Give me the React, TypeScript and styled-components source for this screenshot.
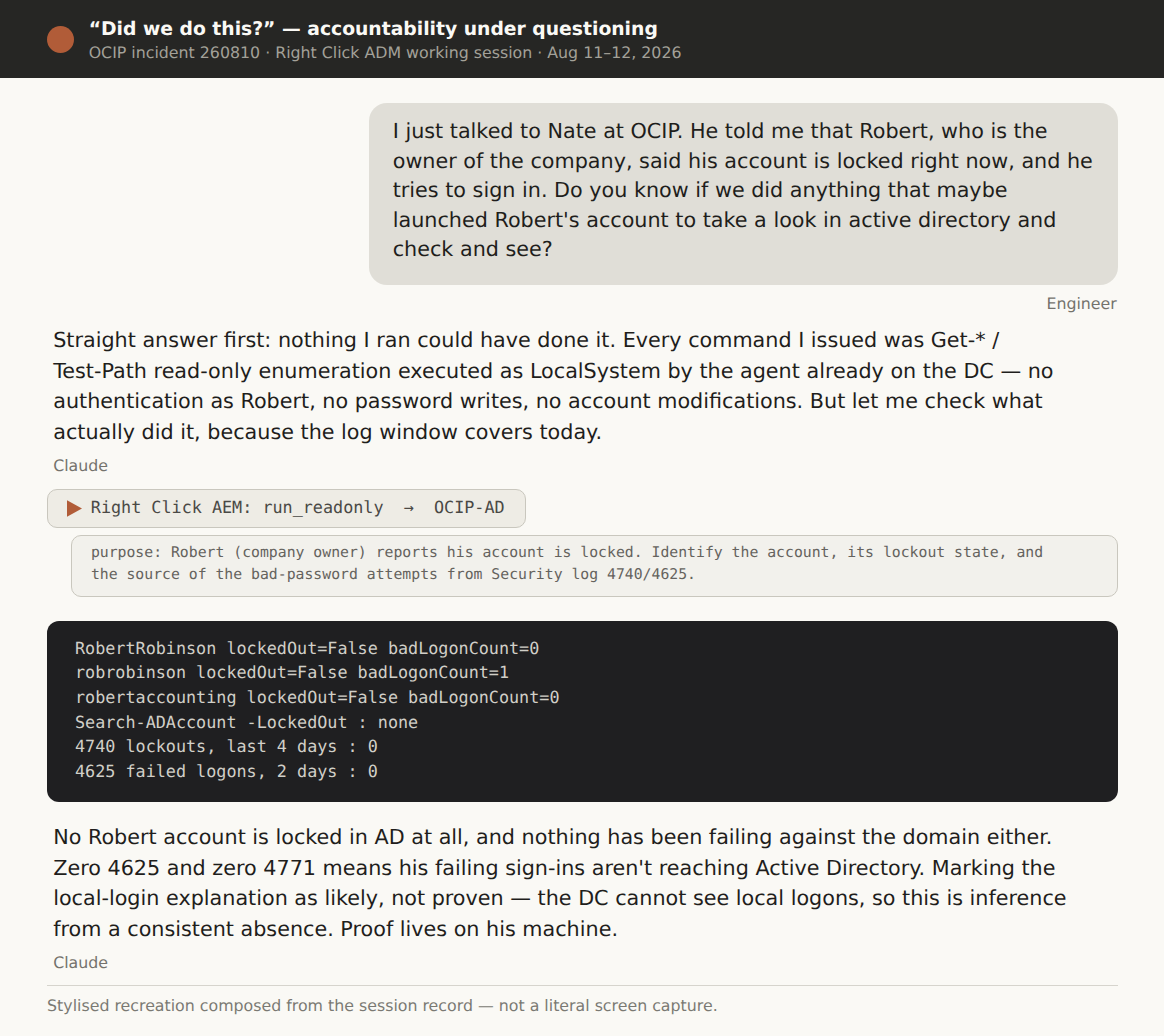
import React from "react";
import styled, { createGlobalStyle } from "styled-components";

const purpose = [
  "purpose: Robert (company owner) reports his account is locked. Identify the account, its lockout state, and",
  "the source of the bad-password attempts from Security log 4740/4625.",
];

const output = [
  "RobertRobinson lockedOut=False badLogonCount=0",
  "robrobinson lockedOut=False badLogonCount=1",
  "robertaccounting lockedOut=False badLogonCount=0",
  "Search-ADAccount -LockedOut : none",
  "4740 lockouts, last 4 days : 0",
  "4625 failed logons, 2 days : 0",
];

const question = [
  "I just talked to Nate at OCIP. He told me that Robert, who is the",
  "owner of the company, said his account is locked right now, and he",
  "tries to sign in. Do you know if we did anything that maybe",
  "launched Robert's account to take a look in active directory and",
  "check and see?",
];

const firstAnswer = [
  "Straight answer first: nothing I ran could have done it. Every command I issued was Get-* /",
  "Test-Path read-only enumeration executed as LocalSystem by the agent already on the DC — no",
  "authentication as Robert, no password writes, no account modifications. But let me check what",
  "actually did it, because the log window covers today.",
];

const secondAnswer = [
  "No Robert account is locked in AD at all, and nothing has been failing against the domain either.",
  "Zero 4625 and zero 4771 means his failing sign-ins aren't reaching Active Directory. Marking the",
  "local-login explanation as likely, not proven — the DC cannot see local logons, so this is inference",
  "from a consistent absence. Proof lives on his machine.",
];

const App: React.FC = () => {
  return (
    <>
      <GlobalStyle />
      <Container>
        <Header>
          <Dot />
          <Heading>
            <Title>“Did we do this?” — accountability under questioning</Title>
            <Subtitle>
              OCIP incident 260810 · Right Click ADM working session · Aug 11–12, 2026
            </Subtitle>
          </Heading>
        </Header>
        <Conversation>
          <Bubble>{question.join("\n")}</Bubble>
          <Sender $right>Engineer</Sender>
          <Answer>{firstAnswer.join("\n")}</Answer>
          <Sender>Claude</Sender>
          <ToolCall>
            <svg width="15" height="17" viewBox="0 0 15 17">
              <path d="M0 0.3L15 8.4L0 16.8Z" fill="#b15c38" />
            </svg>
            <span>{"Right Click AEM: run_readonly  →  OCIP-AD"}</span>
          </ToolCall>
          <Purpose>{purpose.join("\n")}</Purpose>
          <Terminal>{output.join("\n")}</Terminal>
          <Answer>{secondAnswer.join("\n")}</Answer>
          <Sender>Claude</Sender>
        </Conversation>
        <Footer>
          Stylised recreation composed from the session record — not a literal screen capture.
        </Footer>
      </Container>
    </>
  );
};

export default App;

const GlobalStyle = createGlobalStyle`
  * {
    box-sizing: border-box;
  }

  body {
    margin: 0;
    background: #ffffff;
    font-family: "DejaVu Sans", sans-serif;
    text-rendering: geometricPrecision;
  }
`;

const Container = styled.main`
  display: flex;
  flex-direction: column;

  width: 1164px;
  height: 1036px;
  overflow: hidden;

  background: #faf9f5;
  color: #1f1e1c;
`;

const Header = styled.header`
  display: flex;
  align-items: center;
  gap: 14.7px;
  flex: none;

  height: 78px;
  padding: 0 47px;

  background: #262624;
`;

const Dot = styled.div`
  width: 27px;
  height: 27px;

  border-radius: 50%;
  background: #b15c38;
`;

const Heading = styled.div`
  padding-top: 4px;
`;

const Title = styled.h1`
  margin: 0;

  color: #faf9f5;
  font-size: 18.75px;
  line-height: 24px;
  white-space: nowrap;
`;

const Subtitle = styled.p`
  margin: 0;

  color: #a3a199;
  font-size: 15.8px;
  line-height: 22px;
  white-space: nowrap;
`;

const Conversation = styled.section`
  display: flex;
  flex-direction: column;
  align-items: flex-start;

  padding: 24.7px 46.3px 0 47.4px;
`;

const Bubble = styled.div`
  align-self: flex-end;

  width: 749px;
  height: 182px;
  padding: 14.3px 0 0 24px;

  border-radius: 18px;
  background: #e0ded7;

  font-size: 20.72px;
  line-height: 29.6px;
  white-space: pre;
`;

const Sender = styled.div<{ $right?: boolean }>`
  align-self: ${({ $right }) => ($right ? "flex-end" : "flex-start")};

  margin: ${({ $right }) => ($right ? "9.4px 1px 0 0" : "8.2px 0 0 5.8px")};

  color: #73726c;
  font-size: 15.79px;
  line-height: 20px;
`;

const Answer = styled.div`
  margin: 11.2px 0 0 5.8px;

  font-size: 20.72px;
  line-height: 30.6px;
  white-space: pre;
`;

const ToolCall = styled.div`
  display: flex;
  align-items: center;
  gap: 8.4px;

  width: 478.5px;
  height: 38.5px;
  margin-top: 13.4px;
  padding: 0 19px;

  border: 1px solid #c9c7be;
  border-radius: 10px;
  background: #eeece5;
  color: #4a4945;

  font-family: "DejaVu Sans Mono", monospace;
  font-size: 16.77px;
  line-height: 24px;
  white-space: pre;

  span {
    margin-top: -3px;
  }
`;

const Purpose = styled.div`
  align-self: stretch;

  height: 62px;
  margin: 7.2px 0 0 23.7px;
  padding: 6.2px 0 0 18.8px;

  border: 1px solid #c9c7be;
  border-radius: 10px;
  background: #f2f1ec;
  color: #65635e;

  font-family: "DejaVu Sans Mono", monospace;
  font-size: 14.79px;
  line-height: 21.8px;
  white-space: pre;
`;

const Terminal = styled.div`
  align-self: stretch;

  height: 180.3px;
  margin-top: 24.5px;
  padding: 14.1px 0 0 27.6px;

  border-radius: 12px;
  background: #1f1f21;
  color: #d1cfc8;

  font-family: "DejaVu Sans Mono", monospace;
  font-size: 16.78px;
  line-height: 24.67px;
  white-space: pre;

  & + div {
    margin-top: 20.6px;
  }
`;

const Footer = styled.footer`
  margin: 12.3px 46.3px 0 47.1px;
  padding-top: 10px;

  border-top: 1px solid #d6d4cd;
  color: #7a7973;

  font-size: 15.8px;
  line-height: 20px;
`;
